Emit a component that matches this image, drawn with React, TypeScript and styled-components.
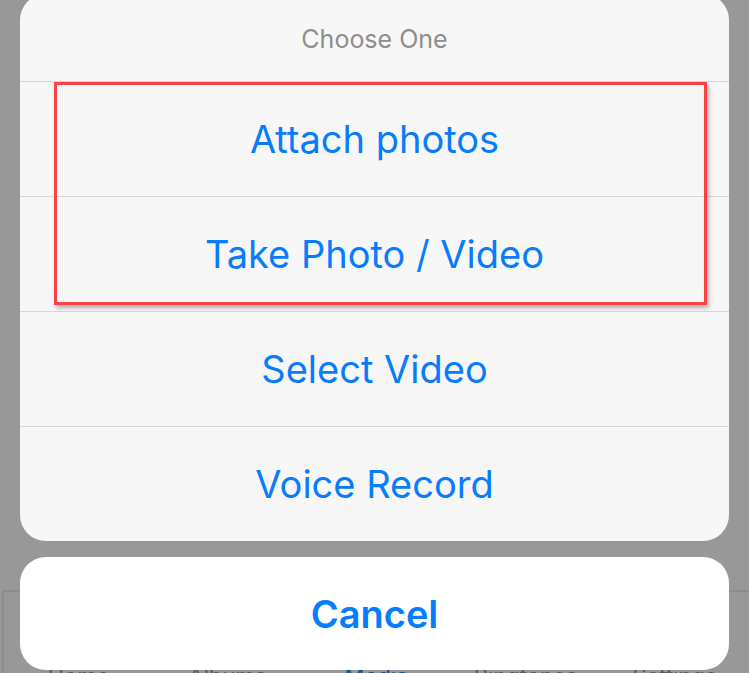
import React from "react";
import styled, { createGlobalStyle } from "styled-components";

const GlobalStyle = createGlobalStyle`
  html, body {
    margin: 0;
    padding: 0;
    background: #989898;
    overflow: hidden;
  }
  * {
    box-sizing: border-box;
  }
`;

const actions = ["Attach photos", "Take Photo / Video", "Select Video", "Voice Record"];
const tabs = ["Home", "Albums", "Media", "Ringtones", "Settings"];

const App = () => {
  return (
    <>
      <GlobalStyle />
      <Screen>
        <Backdrop>
          <Rule />
          <TabBar>
            {tabs.map((t) => (
              <TabLabel key={t} $active={t === "Media"}>
                {t}
              </TabLabel>
            ))}
          </TabBar>
        </Backdrop>

        <Overlay>
          <Sheet>
            <Title>Choose One</Title>
            <Highlighted>
              {actions.slice(0, 2).map((a) => (
                <Action key={a}>{a}</Action>
              ))}
              <Marker />
            </Highlighted>
            {actions.slice(2).map((a) => (
              <Action key={a}>{a}</Action>
            ))}
          </Sheet>
          <CancelButton>Cancel</CancelButton>
        </Overlay>
      </Screen>
    </>
  );
};

export default App;

// =================================================================

const Screen = styled.div`
  position: relative;
  width: 749px;
  height: 673px;
  overflow: hidden;
  background: #989898;
  font-family: "Inter", "Liberation Sans", sans-serif;
`;

const Backdrop = styled.div`
  display: flex;
  flex-direction: column;
  height: 100%;
  padding-top: 553px;
`;

const Rule = styled.div`
  height: 2px;
  margin: 0 32px;
  background: #656565;
`;

const TabBar = styled.nav`
  flex: 1;
  margin-top: 37px;
  margin-left: 2px;
  display: grid;
  grid-template-columns: repeat(5, 1fr);
  border-top: 2px solid #8b8b93;
  border-left: 2px solid #8b8b93;
  padding-top: 73px;
`;

const TabLabel = styled.span<{ $active?: boolean }>`
  text-align: center;
  font-size: 22px;
  line-height: 1;
  color: ${(p) => (p.$active ? "#0b4f9e" : "#5a5a5a")};
`;

const Overlay = styled.div`
  position: absolute;
  inset: 0;
  display: flex;
  flex-direction: column;
  gap: 16px;
  padding: 0 20px;
  margin-top: -6px;
`;

const Sheet = styled.div`
  display: flex;
  flex-direction: column;
  background: #f7f7f7;
  border-radius: 26px;
  overflow: hidden;
`;

const Title = styled.div`
  height: 87px;
  display: flex;
  align-items: center;
  justify-content: center;
  padding-top: 2px;
  font-size: 25px;
  color: #8e8e8e;
`;

const Highlighted = styled.div`
  position: relative;
  display: flex;
  flex-direction: column;
`;

const Action = styled.button`
  height: 115px;
  border: 0;
  border-top: 1px solid #d6d6d6;
  background: transparent;
  font-family: inherit;
  font-size: 38px;
  color: #087cfa;
  cursor: pointer;
`;

const Marker = styled.div`
  position: absolute;
  left: 34px;
  top: 1px;
  width: 653px;
  height: 223px;
  border: 3px solid #fb4347;
  box-shadow: 2px 3px 4px rgba(0, 0, 0, 0.28);
  pointer-events: none;
`;

const CancelButton = styled.button`
  height: 113px;
  border: 0;
  border-radius: 26px;
  background: #ffffff;
  font-family: inherit;
  font-size: 38px;
  font-weight: 600;
  color: #087cfa;
  cursor: pointer;
`;
